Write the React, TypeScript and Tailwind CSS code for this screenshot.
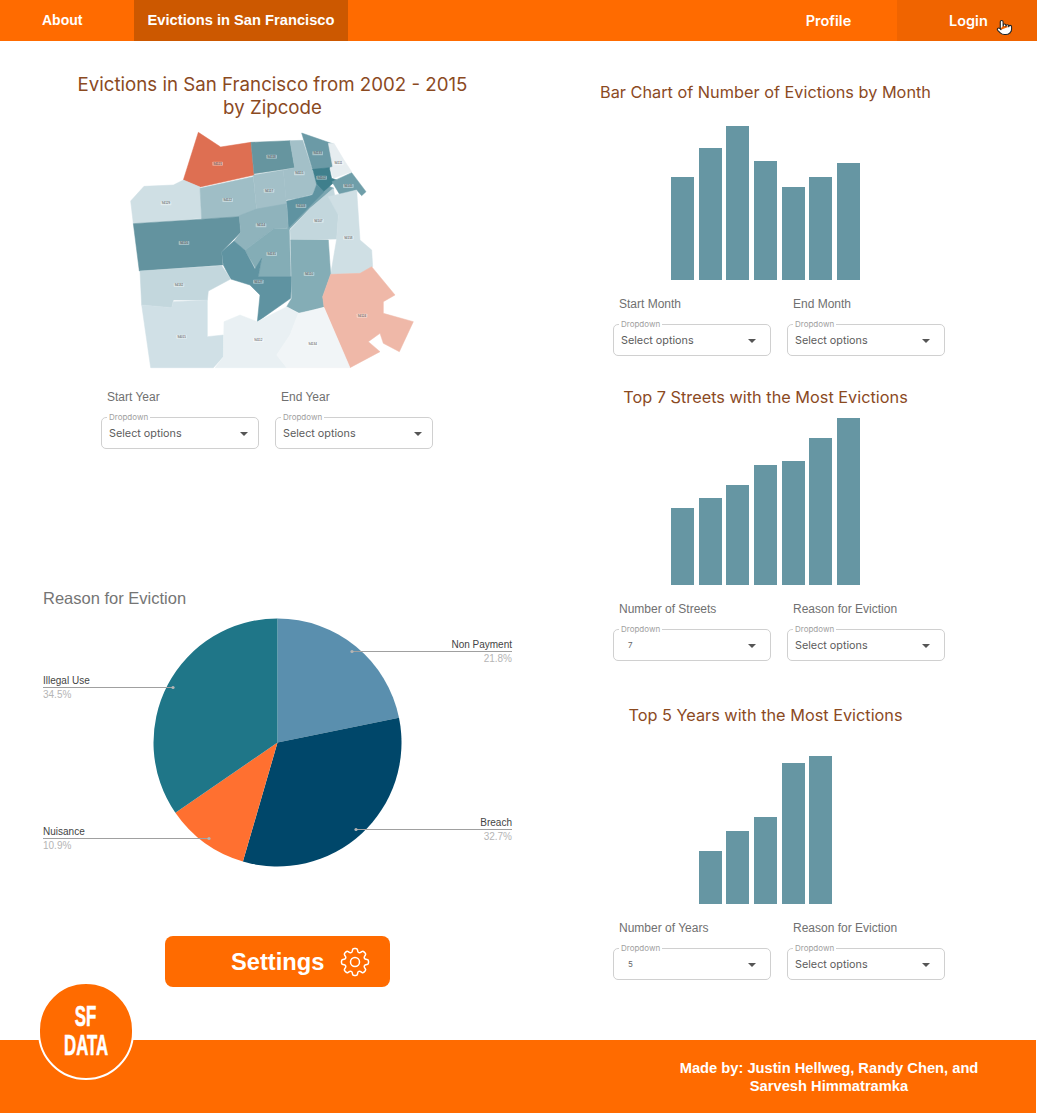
import { Pointer } from "lucide-react";
import { HiOutlineCog8Tooth } from "react-icons/hi2";

const regions: [string, string][] = [
  ["#7aa5b0", "570,215 612,178 642,190 570,250 505,316 500,300"],
  ["#de6f52", "235,22 302,66 393,52 402,150 240,186 190,165"],
  ["#66959f", "393,52 510,47 524,128 402,146"],
  ["#a3c0c8", "510,47 548,46 575,130 590,178 578,208 530,220 498,225 490,135 524,128"],
  ["#6b9aa6", "545,24 640,57 638,128 578,135"],
  ["#e6edf0", "625,55 642,55 672,105 695,140 640,160 630,128 638,125"],
  ["#3f7f8c", "578,133 628,128 635,160 650,165 610,200 590,178"],
  ["#6f9ea9", "636,170 695,143 738,200 725,212 710,195 660,210"],
  ["#cfdfe4", "32,228 72,184 160,180 190,165 240,186 245,280 40,296"],
  ["#9fbec6", "240,190 400,155 410,258 358,276 245,282"],
  ["#a3c0c8", "400,150 490,135 500,240 410,258"],
  ["#5f93a1", "500,228 578,210 590,178 612,200 505,308"],
  ["#63939f", "40,296 358,275 362,322 305,380 308,420 58,438"],
  ["#8fb3bc", "358,272 410,252 500,236 505,308 460,312 375,376 342,348 362,322"],
  ["#84adb6", "460,312 508,310 512,455 415,455 425,400 410,435 375,376"],
  ["#5f93a1", "342,348 375,376 405,432 425,400 415,455 515,455 512,520 412,590 420,510 390,480 332,462 310,420 305,380"],
  ["#c3d7dd", "510,315 570,250 640,190 655,270 650,342 512,345"],
  ["#cfdfe4", "625,215 710,195 720,345 755,375 758,425 720,445 632,448 650,342 655,270"],
  ["#84adb6", "512,345 625,345 632,448 608,515 612,545 540,565 500,545 515,520"],
  ["#efb8a8", "632,448 720,445 755,425 825,510 790,530 790,565 880,590 838,680 790,655 780,625 745,650 780,680 690,728 612,545 608,515"],
  ["#c3d7dd", "60,438 305,422 332,462 265,498 262,525 160,525 155,548 65,540"],
  ["#d0e0e6", "65,540 155,548 160,530 262,525 262,635 310,630 310,695 280,728 92,728"],
  ["#e9f0f3", "312,590 360,570 412,590 500,545 535,565 510,630 470,690 500,728 285,728 310,695"],
  ["#f1f5f7", "535,565 612,548 690,728 500,728 470,690 510,630"],
];

const mapLabels: [number, number, string][] = [
  [293, 116, "94121"], [455, 95, "94118"], [538, 145, "94115"], [593, 85, "94133"], [655, 115, "94111"],
  [605, 158, "94102"], [685, 183, "94105"], [138, 235, "94129"], [323, 225, "94122"], [447, 197, "94117"],
  [543, 243, "94103"], [595, 287, "94107"], [685, 338, "94158"], [423, 301, "94114"], [455, 387, "94131"],
  [192, 354, "94116"], [415, 470, "94127"], [177, 480, "94132"], [567, 447, "94110"], [726, 572, "94124"],
  [185, 635, "94015"], [415, 645, "94112"], [578, 657, "94134"],
];

function SfMap() {
  return (
    <svg width="300" height="250" viewBox="0 0 900 750" className="block ml-[120px]">
      {regions.map(([fill, pts], i) => (
        <polygon key={i} points={pts} fill={fill} stroke={fill} strokeWidth="1.5" strokeLinejoin="round" />
      ))}
      {mapLabels.map(([x, y, t]) => (
        <g key={t}>
          <rect x={x - 16} y={y - 6} width="32" height="12" fill="#ffffff" fillOpacity="0.4" rx="2" />
          <text x={x} y={y + 3} textAnchor="middle" fontSize="9" fill="#444444" fontFamily="'Liberation Sans', sans-serif">
            {t}
          </text>
        </g>
      ))}
    </svg>
  );
}

function Dropdown({ label, value, caret }: { label: string; value?: string; caret: string }) {
  return (
    <div className="w-[158px]">
      <div className="pl-[6px] h-4 text-[12px] leading-4 text-[#707070] font-['Liberation_Sans',sans-serif]">{label}</div>
      <div className="relative mt-3 h-8 rounded-[5px] border border-[#d0d0d0] flex items-center pt-[3px] font-['Inter',sans-serif]">
        <span className="absolute left-[5px] -top-[6px] bg-white px-[2px] text-[8px] leading-[10px] text-[#a0a0a0]">Dropdown</span>
        {value ? (
          <span className="ml-[14px] -translate-y-[2px] text-[8px] text-[#666666]">{value}</span>
        ) : (
          <span className="ml-[7px] text-[10.8px] text-[#5c5c5c]">Select options</span>
        )}
        <span className={`absolute top-[14px] w-0 h-0 border-l-[4px] border-r-[4px] border-t-[4px] border-l-transparent border-r-transparent border-t-[#555555] ${caret}`} />
      </div>
    </div>
  );
}

function Bars({ tops, bottom, height }: { tops: number[]; bottom: number; height: string }) {
  return (
    <div className={`flex items-end justify-center gap-[4.67px] ${height}`}>
      {tops.map((t, i) => (
        <div key={i} className="w-[23px] bg-[#6696a3]" style={{ height: bottom - t }} />
      ))}
    </div>
  );
}

function polar(r: number, frac: number) {
  const a = frac * Math.PI * 2;
  return [Math.sin(a) * r, -Math.cos(a) * r];
}

const slices = [
  { v: 0.218, c: "#5a8fae" },
  { v: 0.327, c: "#00476a" },
  { v: 0.109, c: "#ff7030" },
  { v: 0.346, c: "#1f7688" },
];

function Pie() {
  let acc = 0;
  const ox = 30;
  const oy = 610;
  const cx = 277.5 - ox;
  const cy = 742.5 - oy;
  const sans = "'Liberation Sans', sans-serif";
  const calls: { x1: number; x2: number; y: number; name: string; pct: string; right?: boolean }[] = [
    { x1: 352, x2: 512, y: 651.5, name: "Non Payment", pct: "21.8%", right: true },
    { x1: 356, x2: 512, y: 829.5, name: "Breach", pct: "32.7%", right: true },
    { x1: 43, x2: 173, y: 687.5, name: "Illegal Use", pct: "34.5%" },
    { x1: 43, x2: 209, y: 838.5, name: "Nuisance", pct: "10.9%" },
  ];
  return (
    <svg width="500" height="270" viewBox="0 0 500 270" className="block ml-[30px]">
      {slices.map((s) => {
        const [x1, y1] = polar(124, acc);
        acc += s.v;
        const [x2, y2] = polar(124, acc);
        return (
          <path
            key={s.c}
            d={`M${cx} ${cy}L${cx + x1} ${cy + y1}A124 124 0 0 1 ${cx + x2} ${cy + y2}Z`}
            fill={s.c}
          />
        );
      })}
      {calls.map((c) => {
        const y = c.y - oy;
        const tx = c.right ? c.x2 - ox : c.x1 - ox;
        const anchor = c.right ? "end" : "start";
        const dotX = c.right ? c.x1 - ox : c.x2 - ox;
        return (
          <g key={c.name}>
            <line x1={c.x1 - ox} x2={c.x2 - ox} y1={y} y2={y} stroke="#a0a0a0" strokeWidth="1" />
            <circle cx={dotX} cy={y} r="1.6" fill="#b5b5b5" />
            <text x={tx} y={y - 4} textAnchor={anchor} fontSize="10" fill="#444444" fontFamily={sans}>{c.name}</text>
            <text x={tx} y={y + 10} textAnchor={anchor} fontSize="10" fill="#b5b5b5" fontFamily={sans}>{c.pct}</text>
          </g>
        );
      })}
    </svg>
  );
}

export default function App() {
  const title = "text-center text-[#8b4a1f] font-['Inter',sans-serif] font-normal";
  const sub = "h-6 text-[16.3px] leading-6";
  return (
    <div className="w-[1037px] bg-white font-['Liberation_Sans',sans-serif]">
      <nav className="h-[41px] bg-[#ff6b00] flex items-stretch text-white font-bold text-[14.7px]">
        <div className="w-[134px] pl-[42px] flex items-center text-[14px]">About</div>
        <div className="w-[214px] flex items-center justify-center bg-[#cc5800]">Evictions in San Francisco</div>
        <div className="flex-1" />
        <div className="w-[137px] flex items-center justify-center font-['Inter',sans-serif] font-semibold text-[14.5px]">Profile</div>
        <div className="relative w-[140px] bg-[#f06400] pl-[52px] flex items-center font-['Inter',sans-serif] font-semibold text-[14.5px]">
          Login
          <Pointer size={17} className="absolute left-[99px] top-[19px] text-[#222222] fill-white" strokeWidth={1.5} />
        </div>
      </nav>

      <main className="h-[999px] flex">
        <section className="w-[545px] pt-[32px]">
          <h1 className={`${title} text-[18.7px] leading-[23px]`}>
            Evictions in San Francisco from 2002 - 2015
            <br />
            by Zipcode
          </h1>
          <div className="mt-[6px]">
            <SfMap />
          </div>
          <div className="mt-[14px] ml-[101px] flex gap-4">
            <Dropdown label="Start Year" caret="right-[10px]" />
            <Dropdown label="End Year" caret="right-[10px]" />
          </div>
          <h2 className="mt-[137px] ml-[43px] text-[16.5px] leading-6 text-[#757575]">Reason for Eviction</h2>
          <Pie />
          <button className="mt-[56px] ml-[165px] w-[225px] h-[51px] rounded-lg bg-[#ff6b00] text-white flex items-center pl-[66px]">
            <span className="text-[23.7px] font-bold pt-[2px]">Settings</span>
            <HiOutlineCog8Tooth size={36} strokeWidth={1} className="ml-[13px]" />
          </button>
        </section>

        <section className="w-[441px] pt-[39px]">
          <h2 className={`${title} ${sub}`}>Bar Chart of Number of Evictions by Month</h2>
          <Bars tops={[177, 148, 126, 161, 187, 177, 163]} bottom={280} height="h-[176px]" />
          <div className="mt-4 ml-[68px] flex gap-4">
            <Dropdown label="Start Month" caret="right-[14px]" />
            <Dropdown label="End Month" caret="right-[14px]" />
          </div>

          <h2 className={`${title} ${sub} mt-[29px]`}>Top 7 Streets with the Most Evictions</h2>
          <Bars tops={[508, 498, 485, 465, 461, 438, 418]} bottom={585} height="h-[176px]" />
          <div className="mt-4 ml-[68px] flex gap-4">
            <Dropdown label="Number of Streets" value="7" caret="right-[14px]" />
            <Dropdown label="Reason for Eviction" caret="right-[14px]" />
          </div>

          <h2 className={`${title} ${sub} mt-[42px]`}>Top 5 Years with the Most Evictions</h2>
          <Bars tops={[851, 831, 817, 763, 756]} bottom={904} height="h-[177px]" />
          <div className="mt-[16px] ml-[68px] flex gap-4">
            <Dropdown label="Number of Years" value="5" caret="right-[14px]" />
            <Dropdown label="Reason for Eviction" caret="right-[14px]" />
          </div>
        </section>
      </main>

      <footer className="relative w-[1036px] h-[73px] bg-[#ff6b00] text-white">
        <div className="absolute left-[38px] -top-[58px] w-[96px] h-[98px] rounded-full bg-[#ff6b00] border-2 border-white flex flex-col items-center justify-center font-bold text-[29px] leading-[29px] [-webkit-text-stroke:0.6px_white]">
          <span className="scale-x-[0.58]">SF</span>
          <span className="scale-x-[0.58]">DATA</span>
        </div>
        <div className="absolute left-[670px] top-[19px] w-[318px] text-center text-[14.7px] leading-[18px] font-bold">
          Made by: Justin Hellweg, Randy Chen, and
          <br />
          Sarvesh Himmatramka
        </div>
      </footer>
    </div>
  );
}
